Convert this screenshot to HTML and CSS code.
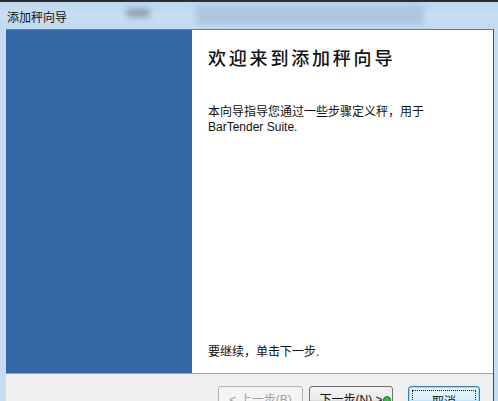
FILE: index.html
```html
<!DOCTYPE html>
<html lang="zh-CN">
<head>
<meta charset="utf-8">
<title>添加秤向导</title>
<link rel="stylesheet" href="styles.css">
</head>
<body>
<div class="window">
  <div class="titlebar">
    <span class="title">添加秤向导</span>
    <span class="blur blur-a"></span>
    <span class="blur blur-b"></span>
  </div>
  <div class="frame">
    <div class="client">
      <div class="main">
        <div class="side"></div>
        <div class="content">
          <h1 class="heading">欢迎来到添加秤向导</h1>
          <p class="intro">本向导指导您通过一些步骤定义秤，用于<br>BarTender Suite.</p>
          <p class="hint">要继续，单击下一步.</p>
        </div>
      </div>
      <div class="footer">
        <button class="btn btn-back" disabled>&lt; 上一步(B)</button>
        <button class="btn btn-next">下一步(N) &gt;<span class="cursor"></span></button>
        <button class="btn btn-cancel"><span class="focus">取消</span></button>
      </div>
    </div>
  </div>
</div>
</body>
</html>
```

FILE: styles.css
```css
html, body {
  margin: 0;
  padding: 0;
  width: 498px;
  height: 401px;
  overflow: hidden;
  background: #c6ddf1;
  font-family: "Liberation Sans", "Noto Sans CJK SC", sans-serif;
}

.window {
  width: 498px;
  height: 401px;
  display: flex;
  flex-direction: column;
  overflow: hidden;
}

.titlebar {
  position: relative;
  flex: none;
  height: 27px;
  border-top: 2px solid #2b2f33;
  background: linear-gradient(180deg, #bcd6ee 0%, #c8def2 45%, #c2daf0 100%);
  display: flex;
  align-items: center;
  overflow: hidden;
}

.title {
  position: relative;
  z-index: 1;
  margin-left: 7px;
  margin-top: 2px;
  font-family: "Noto Sans CJK SC", sans-serif;
  font-size: 12px;
  line-height: 16px;
  color: #111;
}

.blur {
  position: absolute;
  filter: blur(3px);
}

.blur-a {
  left: 126px;
  top: 7px;
  width: 24px;
  height: 8px;
  background: #6e7c8c;
  border-radius: 4px;
  opacity: 0.7;
}

.blur-b {
  left: 196px;
  top: 3px;
  width: 228px;
  height: 20px;
  background: #a6c0dc;
  border-radius: 3px;
  opacity: 0.8;
}

.frame {
  flex: 1;
  min-height: 0;
  display: flex;
  padding-left: 6px;
}

.client {
  width: 487px;
  border-top: 1px solid #6f7a86;
  border-right: 1px solid #4a4f55;
  display: flex;
  flex-direction: column;
  background: #f0f0f0;
  overflow: hidden;
}

.main {
  flex: none;
  height: 343px;
  display: flex;
  border-bottom: 1px solid #a0a0a0;
  background: #fff;
}

.side {
  width: 186px;
  background: #3467a6;
}

.content {
  flex: 1;
  display: flex;
  flex-direction: column;
  padding: 18px 0 13px 16px;
}

.heading {
  margin: 0;
  font-family: "Noto Sans CJK SC", sans-serif;
  font-size: 18px;
  line-height: 18px;
  font-weight: 500;
  letter-spacing: 2.8px;
  color: #111;
}

.intro {
  margin: 39px 0 0;
  font-size: 12px;
  line-height: 15px;
  color: #111;
}

.hint {
  margin: auto 0 0;
  font-size: 12px;
  line-height: 15px;
  color: #111;
}

.footer {
  flex: 1;
  min-height: 0;
  display: flex;
  align-items: flex-start;
  padding: 12px 0 0 212px;
}

.btn {
  position: relative;
  flex: none;
  height: 28px;
  padding: 0 0 3px;
  font-family: "Liberation Sans", "Noto Sans CJK SC", sans-serif;
  font-size: 12px;
  color: #111;
  border: 1px solid #707070;
  border-radius: 3px;
  background: linear-gradient(180deg, #f2f2f2 0%, #ebebeb 50%, #dddddd 51%, #cfcfcf 100%);
}

.btn-back {
  width: 85px;
  color: #a0a0a0;
  border-color: #adb2b5;
  background: #f4f4f4;
}

.btn-next {
  width: 84px;
  margin-left: 6px;
}

.cursor {
  position: absolute;
  right: 1px;
  top: 9px;
  width: 8px;
  height: 8px;
  border-radius: 50%;
  background: #3cb54a;
  border: 1px solid #1f7a2c;
  box-sizing: border-box;
}

.btn-cancel {
  width: 72px;
  margin-left: 15px;
  border-color: #3c7fb1;
  box-shadow: inset 0 0 0 1px #9fd5f5;
  background: linear-gradient(180deg, #eaf6fd 0%, #d9f0fc 50%, #bee6fd 51%, #a7d9f5 100%);
}

.focus {
  position: absolute;
  left: 3px;
  right: 3px;
  top: 3px;
  bottom: 3px;
  border: 1px dotted #222;
  display: flex;
  align-items: center;
  justify-content: center;
}
```
